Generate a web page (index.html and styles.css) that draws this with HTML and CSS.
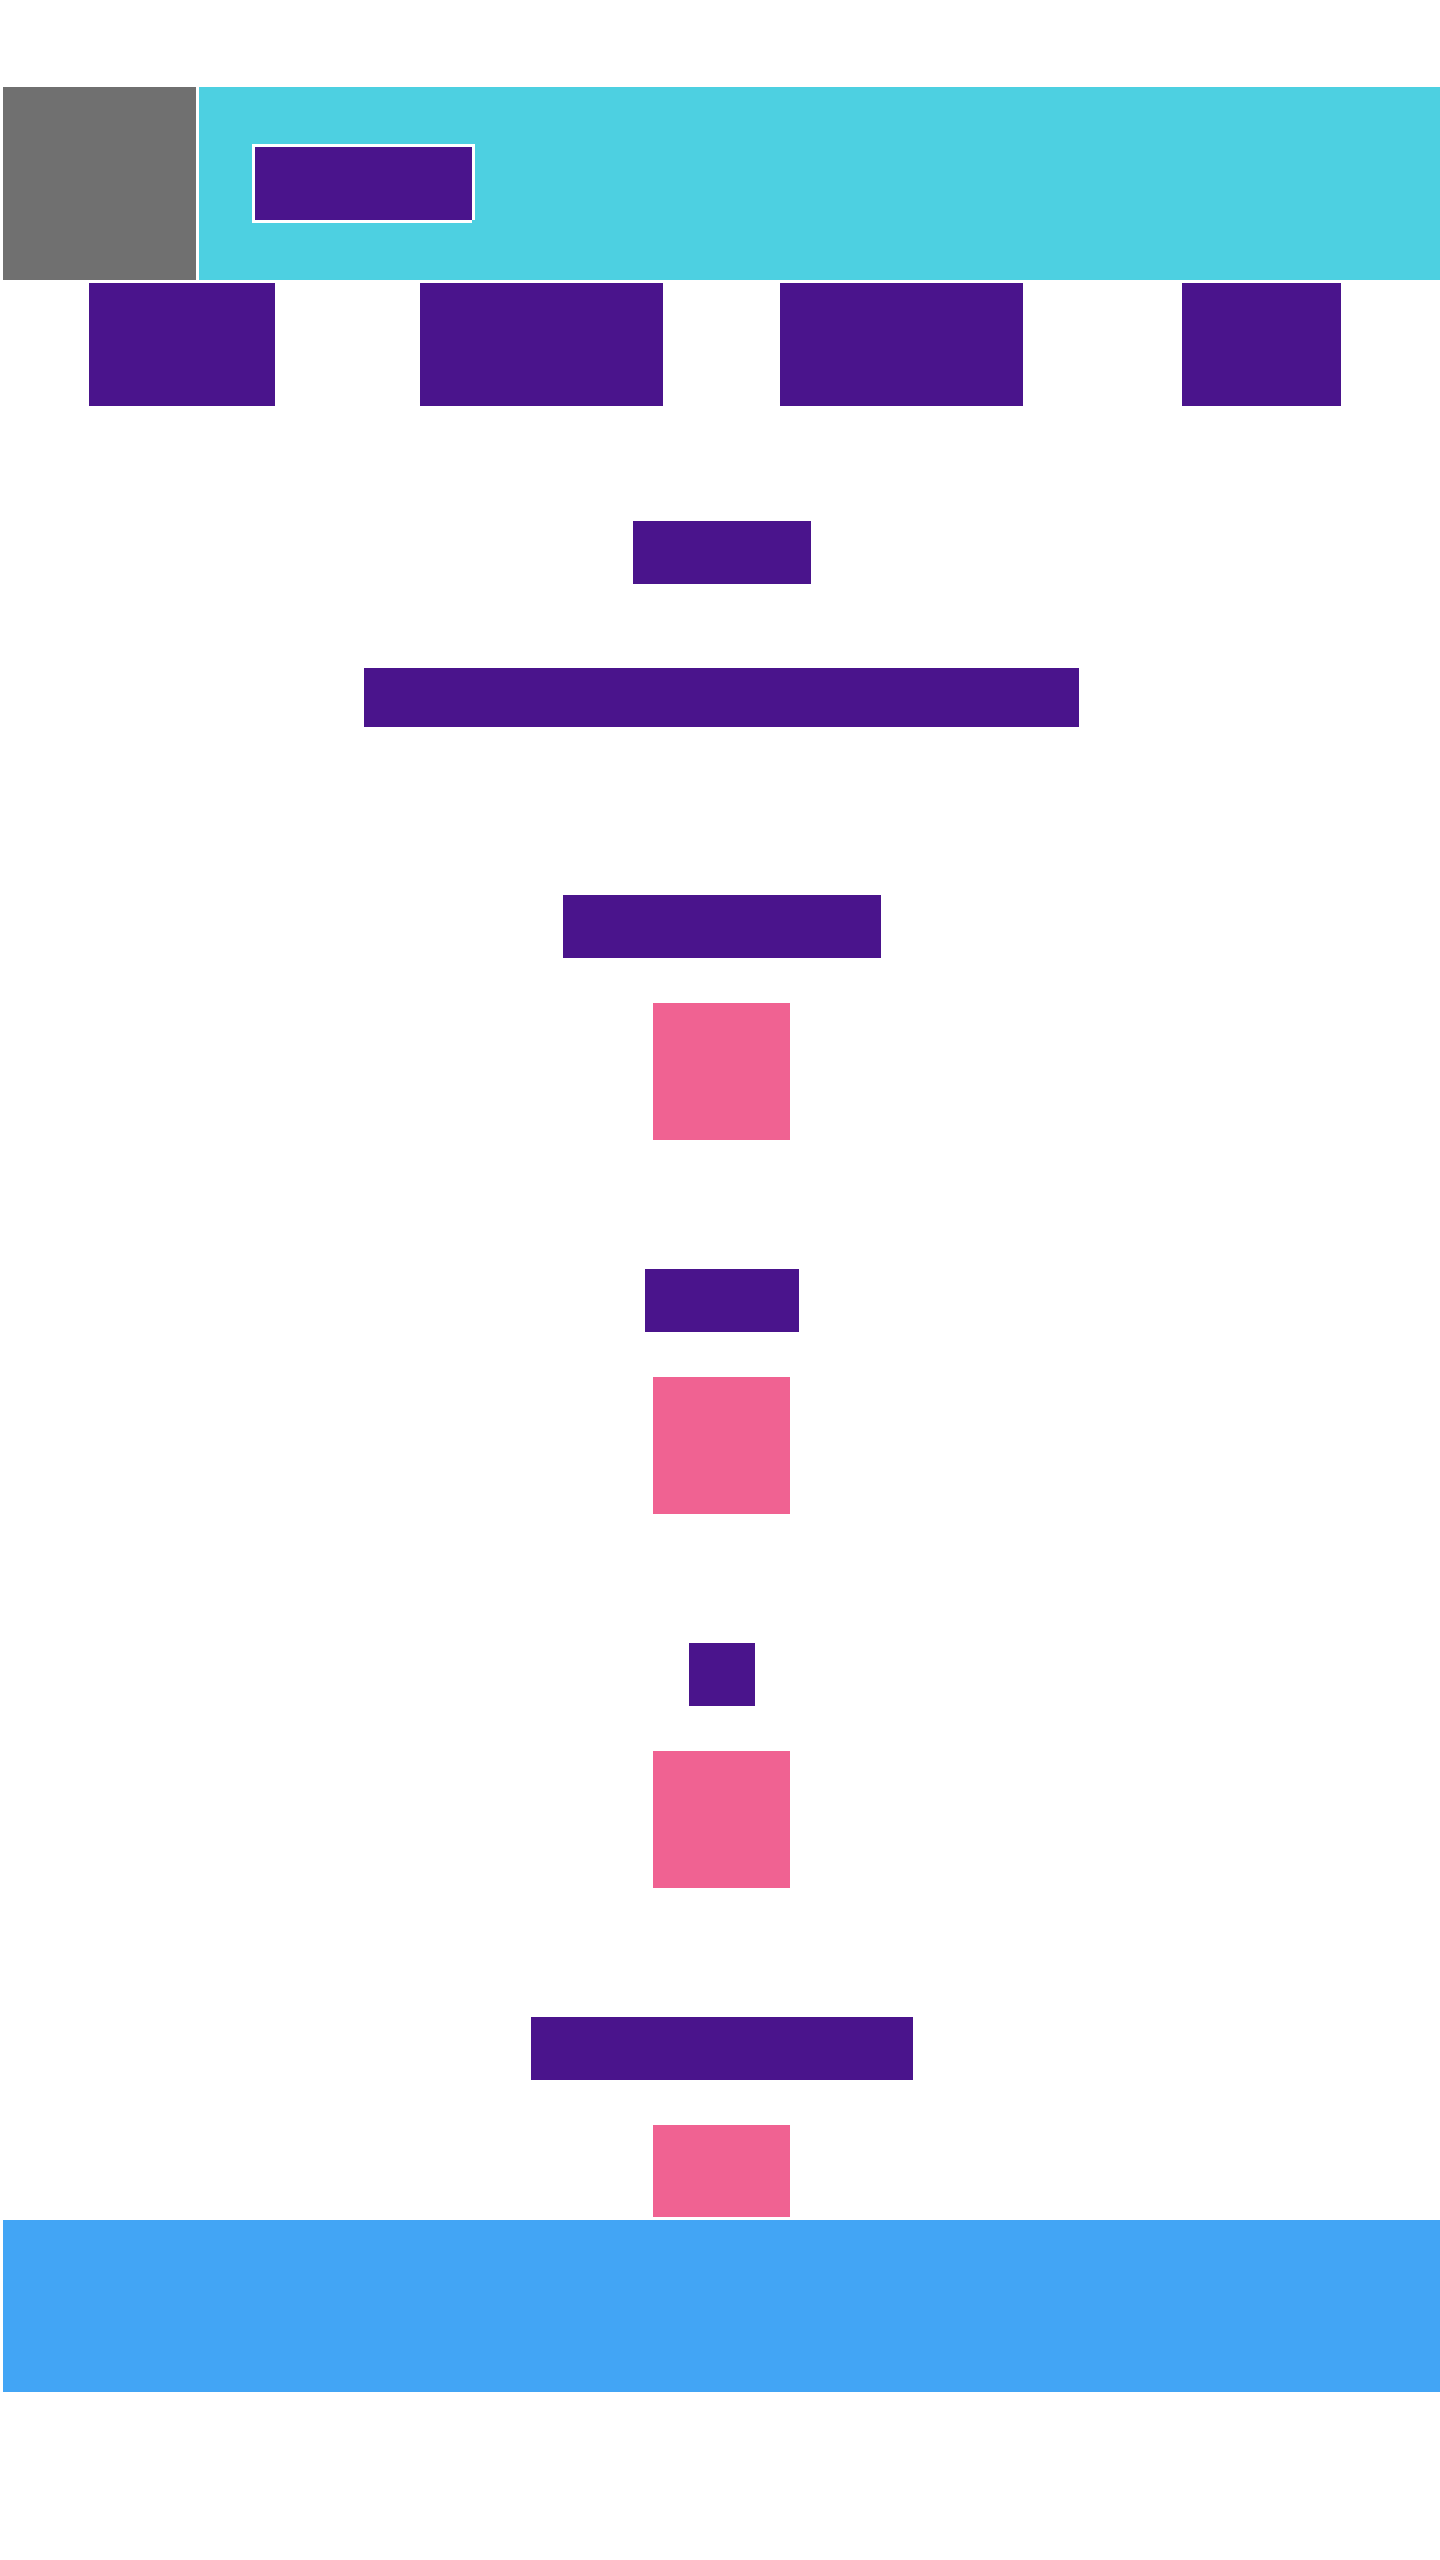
FILE: index.html
```html
<!DOCTYPE html>
<html lang="en">
<head>
<meta charset="utf-8">
<title>Page</title>
<link rel="stylesheet" href="styles.css">
</head>
<body>
<div class="page">
  <header class="header">
    <div class="logo"></div>
    <div class="banner">
      <div class="banner-btn"></div>
    </div>
  </header>
  <nav class="nav">
    <div class="nav-item w186"></div>
    <div class="nav-item w243"></div>
    <div class="nav-item w243"></div>
    <div class="nav-item w159"></div>
  </nav>
  <main class="main">
    <div class="hero-title"></div>
    <div class="hero-sub"></div>
    <section class="section first">
      <div class="sec-title w318"></div>
      <div class="tile"></div>
    </section>
    <section class="section">
      <div class="sec-title w154"></div>
      <div class="tile"></div>
    </section>
    <section class="section">
      <div class="sec-title w66"></div>
      <div class="tile"></div>
    </section>
    <section class="section">
      <div class="sec-title w382"></div>
      <div class="tile"></div>
    </section>
  </main>
  <footer class="footer"></footer>
</div>
</body>
</html>
```
FILE: styles.css
```css
html, body {
  margin: 0;
  padding: 0;
  background: #ffffff;
  font-family: "Liberation Sans", Arial, sans-serif;
}

.page {
  padding: 87px 0 0 3px;
  display: grid;
  grid-template-rows: 193px 123px 1808px 172px;
  row-gap: 3px;
}

.header {
  display: grid;
  grid-template-columns: 193px 1fr;
  column-gap: 3px;
}

.logo {
  background: #707070;
}

.banner {
  background: #4dd0e1;
  display: flex;
  align-items: center;
  padding-left: 56px;
}

.banner-btn {
  width: 217px;
  height: 73px;
  background: #4a148c;
  box-shadow: -3px -3px 0 #ffffff, 3px -3px 0 #ffffff, -3px 3px 0 #ffffff, 3px 0 0 #ffffff, 0 3px 0 #ffffff;
}

.nav {
  display: grid;
  grid-template-columns: repeat(4, 1fr);
  column-gap: 3px;
}

.nav-item {
  justify-self: center;
  height: 123px;
  background: #4a148c;
}

.w186 { width: 186px; }
.w243 { width: 243px; }
.w159 { width: 159px; }
.w318 { width: 318px; }
.w154 { width: 154px; }
.w66 { width: 66px; }
.w382 { width: 382px; }

.main {
  overflow: hidden;
  display: flex;
  flex-direction: column;
  align-items: center;
  padding-top: 112px;
  box-sizing: border-box;
}

.hero-title {
  width: 178px;
  height: 63px;
  flex: none;
  background: #4a148c;
}

.hero-sub {
  width: 715px;
  height: 59px;
  flex: none;
  margin-top: 84px;
  background: #4a148c;
}

.section {
  display: flex;
  flex-direction: column;
  align-items: center;
  flex: none;
  margin-top: 129px;
}

.section.first {
  margin-top: 168px;
}

.sec-title {
  height: 63px;
  background: #4a148c;
}

.tile {
  width: 137px;
  height: 137px;
  margin-top: 45px;
  background: #f06292;
}

.footer {
  background: #42a5f5;
}
```
